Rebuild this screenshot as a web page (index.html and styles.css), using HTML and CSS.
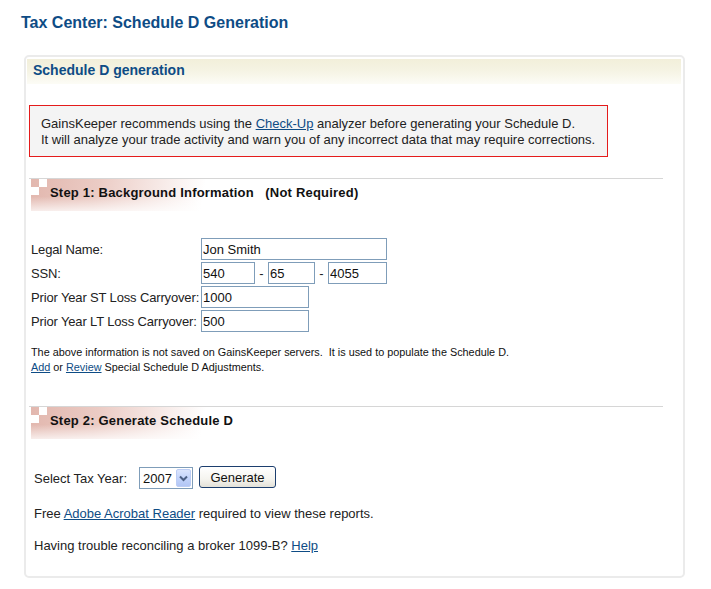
FILE: index.html
```html
<!DOCTYPE html>
<html lang="en">
<head>
  <meta charset="UTF-8">
  <meta name="viewport" content="width=device-width, initial-scale=1.0">
  <title>Tax Center: Schedule D Generation</title>
  <link rel="stylesheet" href="styles.css">
</head>
<body>
  <h1 class="page-title">Tax Center: Schedule D Generation</h1>
  <div class="panel">
    <div class="panel-head">Schedule D generation</div>

    <div class="warning">
      GainsKeeper recommends using the <a href="#">Check-Up</a> analyzer before generating your Schedule D.<br>
      It will analyze your trade activity and warn you of any incorrect data that may require corrections.
    </div>

    <div class="step">
      <div class="step-title">Step 1: Background Information &nbsp;&nbsp;(Not Required)</div>
    </div>

    <div class="form">
      <label class="form-label">Legal Name:</label>
      <div class="form-field"><input type="text" class="txt w-name" value="Jon Smith"></div>

      <label class="form-label">SSN:</label>
      <div class="form-field">
        <input type="text" class="txt w-ssn1" value="540"><span class="dash">-</span><input type="text" class="txt w-ssn2" value="65"><span class="dash">-</span><input type="text" class="txt w-ssn3" value="4055">
      </div>

      <label class="form-label">Prior Year ST Loss Carryover:</label>
      <div class="form-field"><input type="text" class="txt w-loss" value="1000"></div>

      <label class="form-label">Prior Year LT Loss Carryover:</label>
      <div class="form-field"><input type="text" class="txt w-loss" value="500"></div>
    </div>

    <div class="note">
      The above information is not saved on GainsKeeper servers.&nbsp; It is used to populate the Schedule D.<br>
      <a href="#">Add</a> or <a href="#">Review</a> Special Schedule D Adjustments.
    </div>

    <div class="step step-2">
      <div class="step-title">Step 2: Generate Schedule D</div>
    </div>

    <div class="generate">
      <span>Select Tax Year:</span>
      <div class="select">
        <select class="year">
          <option>2007</option>
          <option>2006</option>
          <option>2005</option>
        </select>
        <span class="drop">
          <svg width="9" height="7" viewBox="0 0 9 7"><path d="M1 1.5 L4.5 5 L8 1.5" fill="none" stroke="#4d6185" stroke-width="2"/></svg>
        </span>
      </div>
      <button class="btn">Generate</button>
    </div>

    <p class="info">Free <a href="#">Adobe Acrobat Reader</a> required to view these reports.</p>
    <p class="info info-last">Having trouble reconciling a broker 1099-B? <a href="#">Help</a></p>
  </div>
</body>
</html>
```

FILE: styles.css
```css
body {
  margin: 0;
  padding: 0;
  background-color: #fff;
  color: #222;
  font-family: 'Liberation Sans', Arial, sans-serif;
  font-size: 13px;
}
a {
  color: #0e4c85;
  text-decoration: underline;
}
.page-title {
  margin: 0;
  padding: 14px 0 0 21px;
  font-size: 16px;
  line-height: 18px;
  font-weight: bold;
  color: #0e4c85;
}
.panel {
  box-sizing: border-box;
  width: 661px;
  margin: 23px 0 0 24px;
  border: 2px solid #ebebeb;
  border-radius: 5px;
  padding-bottom: 22px;
}
.panel-head {
  margin: 2px 2px 0 1px;
  height: 25px;
  padding-left: 6px;
  line-height: 22px;
  font-size: 14px;
  font-weight: bold;
  color: #0e4c85;
  background: linear-gradient(to bottom, #f2efda 0%, #f5f3e3 45%, #fcfcf6 100%);
}
.warning {
  width: 556px;
  margin: 21px 0 0 3px;
  padding: 10px 10px 8px 11px;
  border: 1px solid #e41b1b;
  background-color: #f4f4f4;
  line-height: 16px;
  white-space: nowrap;
}
.step {
  width: 634px;
  margin: 21px 0 0 3px;
  border-top: 1px solid #d6d6d6;
}
.step-2 {
  margin-top: 31px;
}
.step-title {
  position: relative;
  width: 200px;
  height: 25px;
  margin-left: 2px;
  padding: 7px 0 0 19px;
  font-size: 13px;
  line-height: 14px;
  font-weight: bold;
  letter-spacing: 0.2px;
  color: #111;
  white-space: nowrap;
  background:
    linear-gradient(to bottom, rgba(255,255,255,0) 55%, rgba(255,255,255,0.75) 100%),
    linear-gradient(100deg, #e2b7ae 0%, #ebcbc4 30%, rgba(255,255,255,0) 78%);
}
.step-title::before {
  content: "";
  position: absolute;
  left: 8px;
  top: 0;
  width: 8px;
  height: 8px;
  background-color: #fff;
  box-shadow: -8px 8px 0 #fff;
}
.form {
  display: grid;
  grid-template-columns: 170px auto;
  row-gap: 2px;
  margin: 27px 0 0 5px;
}
.form-label {
  display: flex;
  align-items: center;
  height: 22px;
  white-space: nowrap;
  letter-spacing: -0.15px;
}
.form-field {
  display: flex;
  align-items: center;
  height: 22px;
}
.txt {
  box-sizing: border-box;
  height: 22px;
  margin: 0;
  padding: 0 2px 0 1px;
  border: 1px solid #7f9db9;
  font-family: 'Liberation Sans', Arial, sans-serif;
  font-size: 13px;
  color: #111;
  background: #fff;
}
.w-name { width: 186px; }
.w-ssn1 { width: 54px; }
.w-ssn2 { width: 47px; }
.w-ssn3 { width: 59px; }
.w-loss { width: 108px; }
.dash {
  width: 13px;
  text-align: center;
}
.note {
  margin: 13px 0 0 5px;
  font-size: 10.85px;
  line-height: 15px;
  color: #111;
}
.generate {
  display: flex;
  align-items: center;
  margin: 28px 0 0 8px;
  height: 22px;
}
.select {
  display: flex;
  align-items: center;
  box-sizing: border-box;
  width: 54px;
  height: 22px;
  margin-left: 12px;
  border: 1px solid #7f9db9;
  background: #fff;
}
.year {
  -webkit-appearance: none;
  appearance: none;
  flex: 1;
  min-width: 0;
  height: 20px;
  margin: 0;
  padding: 0 0 0 3px;
  border: 0;
  background: transparent;
  font-family: 'Liberation Sans', Arial, sans-serif;
  font-size: 13px;
  color: #111;
  outline: none;
}
.drop {
  display: flex;
  align-items: center;
  justify-content: center;
  box-sizing: border-box;
  width: 15px;
  height: 18px;
  margin-right: 1px;
  border: 1px solid #bccdf5;
  border-radius: 2px;
  background: linear-gradient(to bottom, #dbe5fd 0%, #c3d4fb 50%, #b2c6f5 100%);
}
.btn {
  box-sizing: border-box;
  width: 77px;
  height: 22px;
  margin: -2px 0 0 6px;
  padding: 0;
  border: 1px solid #1c3e6e;
  border-radius: 3px;
  background: linear-gradient(to bottom, #ffffff 0%, #f5f4ef 60%, #e3e1d8 100%);
  font-family: 'Liberation Sans', Arial, sans-serif;
  font-size: 13px;
  color: #111;
}
.info {
  margin: 17px 0 0 8px;
  line-height: 16px;
}
.info-last {
  margin-top: 16px;
}
```
